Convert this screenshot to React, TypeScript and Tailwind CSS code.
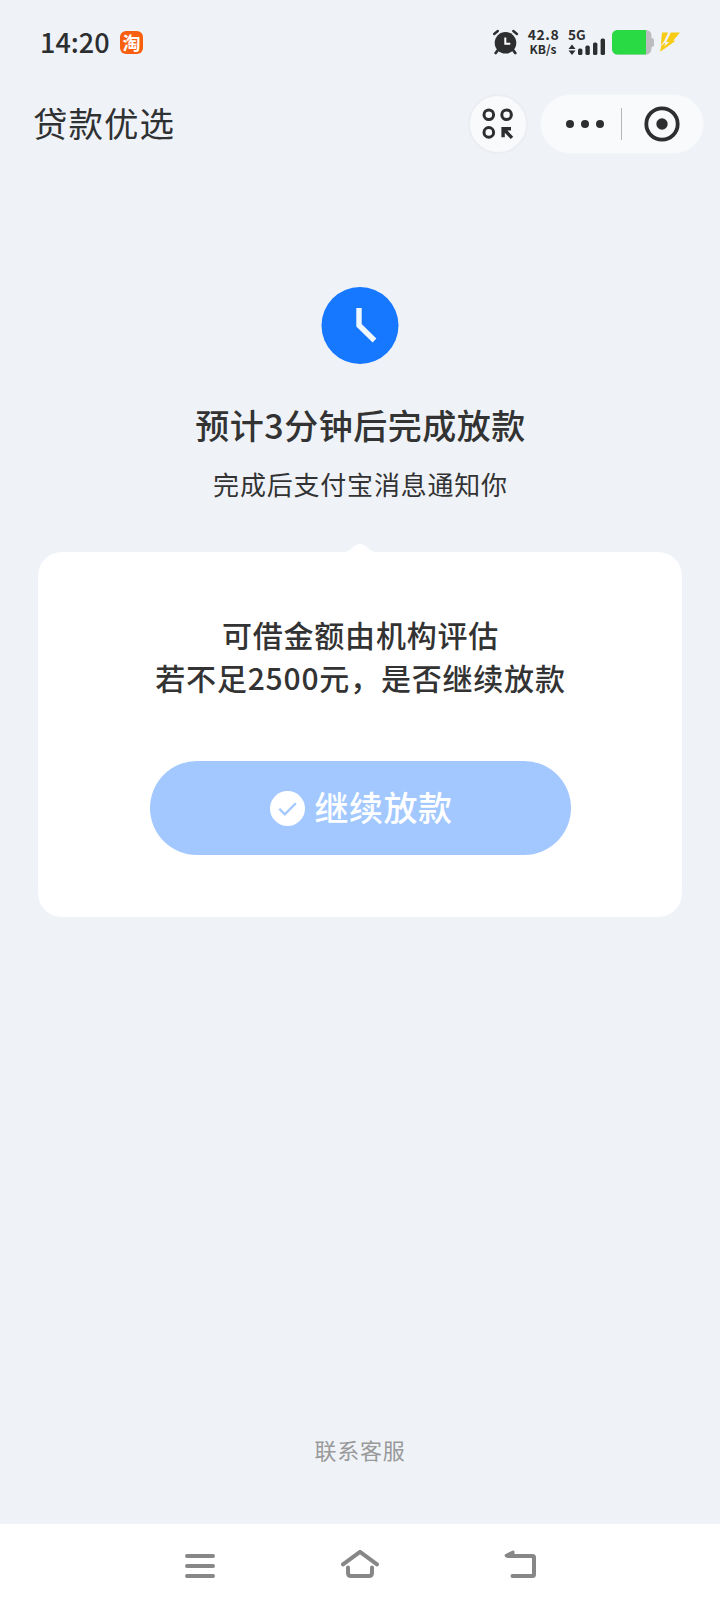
import type { ReactNode } from "react";

function TaobaoBadge() {
  return (
    <span className="flex h-[23px] w-[23px] items-center justify-center rounded-[6px] bg-[#f8600f] text-[18px] leading-none font-bold text-white">
      淘
    </span>
  );
}

function AlarmIcon() {
  return (
    <svg width="26" height="26" viewBox="0 0 26 26" fill="none">
      <circle cx="12.5" cy="13.8" r="10.8" fill="#2c2e30" />
      <path d="M5 21l-2.300 3M20 21l2.300 3" stroke="#2c2e30" strokeWidth="2.800" strokeLinecap="round" />
      <path d="M1.200 5L4.800 2M23.900 5L20.300 2" stroke="#2c2e30" strokeWidth="2.400" strokeLinecap="round" />
      <path d="M12.300 8.400v6.400h5" stroke="#fff" strokeWidth="2" />
    </svg>
  );
}

function SignalIcon() {
  return (
    <svg width="38" height="17" viewBox="0 0 38 17" fill="#2c2e30">
      <path d="M4 6.600L7.500 11H.5zM4 17L7.500 12.600H.5z" />
      <rect x="10" y="10.600" width="4.400" height="6.400" rx="1.600" />
      <rect x="17.400" y="7.600" width="4.400" height="9.400" rx="1.600" />
      <rect x="25" y="4.600" width="4.400" height="12.400" rx="1.600" />
      <rect x="32.600" y="0.600" width="4.400" height="16.400" rx="1.600" />
    </svg>
  );
}

function BatteryIcon() {
  return (
    <svg width="42" height="25" viewBox="0 0 42 25">
      <rect x="36" y="8" width="6" height="9" rx="2.500" fill="#bcbcbe" />
      <rect x="0" y="0" width="39.500" height="24.500" rx="5.500" fill="#bcbcbe" />
      <path d="M5.500 0H34v24.500H5.500A5.500 5.500 0 0 1 0 19V5.500A5.500 5.500 0 0 1 5.500 0z" fill="#29da45" />
    </svg>
  );
}

function BoltIcon() {
  return (
    <svg width="21" height="22" viewBox="0 0 21 22" fill="#f8cc14">
      <path d="M2 1.600H8.200L3.600 11 0.800 14z" />
      <path d="M10.800 1.600H20L13.200 9.800H15.600L6 16.800 0 20.800 1.400 14.600 5.400 11.400 4.400 15.400 9.200 11H6.200z" />
    </svg>
  );
}

function AppsIcon() {
  return (
    <svg width="32" height="32" viewBox="0 0 32 32" fill="none" stroke="#2c2e30">
      <circle cx="6.800" cy="6.700" r="4.800" strokeWidth="3" />
      <circle cx="24.600" cy="6.700" r="4.800" strokeWidth="3" />
      <circle cx="6.800" cy="24.400" r="4.800" strokeWidth="3" />
      <path d="M29 20.700H21.100V29.200M21.600 21L30 29.800" strokeWidth="3.400" />
    </svg>
  );
}

function StatusBar() {
  return (
    <div className="flex h-[84px] items-center pr-[39px] pl-[39px]">
      <span className="relative -top-px w-[71px] pl-px text-[27px] leading-none font-medium text-[#2c2e30]">14:20</span>
      <div className="ml-[10px]">
        <TaobaoBadge />
      </div>
      <div className="ml-auto flex items-center">
        <AlarmIcon />
        <div className="ml-2 flex w-[33px] flex-col items-center font-bold text-[#2c2e30]">
          <span className="h-[13px] text-[14px] leading-[11px] tracking-[0.500px]">42.8</span>
          <span className="h-[13px] pr-px text-[12px] leading-[13px]">KB/s</span>
        </div>
        <div className="ml-2 flex w-[38px] flex-col">
          <span className="h-[8px] text-[13.500px] leading-[9px] font-bold text-[#2c2e30]">5G</span>
          <SignalIcon />
        </div>
        <div className="ml-[6px]">
          <BatteryIcon />
        </div>
        <div className="ml-[6px]">
          <BoltIcon />
        </div>
      </div>
    </div>
  );
}

function TitleBar() {
  return (
    <header className="flex h-[79px] items-center pr-4 pl-[33px]">
      <h1 className="pb-[3px] text-[34.500px] leading-none tracking-[1px] text-[#2f3133]">贷款优选</h1>
      <button className="ml-auto flex h-[60px] w-[60px] items-center justify-center rounded-full border-2 border-[#ebedf3] bg-[#f8fafb]">
        <AppsIcon />
      </button>
      <div className="ml-3 flex h-[60px] w-[164px] items-center rounded-full border border-[#f3f5f9] bg-[#f8fafb]">
        <div className="flex w-[80px] justify-center gap-[7px] pl-[8px]">
          <span className="h-2 w-2 rounded-full bg-[#2c2e30]" />
          <span className="h-2 w-2 rounded-full bg-[#2c2e30]" />
          <span className="h-2 w-2 rounded-full bg-[#2c2e30]" />
        </div>
        <span className="h-8 w-px bg-[#b4b6b8]" />
        <div className="flex flex-1 justify-center pr-[2px]">
          <svg width="36" height="36" viewBox="0 0 36 36">
            <circle cx="18" cy="18" r="15.700" fill="none" stroke="#2c2e30" strokeWidth="3.800" />
            <circle cx="18" cy="18" r="5.700" fill="#2c2e30" />
          </svg>
        </div>
      </div>
    </header>
  );
}

function ConfirmCard() {
  return (
    <section className="relative mx-[38.400px] mt-12 flex h-[365px] flex-col items-center rounded-[24px] bg-white pt-[61px]">
      {/* notch pointing at the status text */}
      <svg className="absolute -top-[8px] left-1/2 -translate-x-1/2" width="34" height="9" viewBox="0 0 34 9" fill="#fff">
        <path d="M0 9C4 8 7 5.500 11 2.500 15 -0.800 19 -0.800 23 2.500 27 5.500 30 8 34 9z" />
      </svg>
      <p className="pl-px text-center text-[30px] leading-[43px] font-medium tracking-[0.800px] text-[#333]">
        可借金额由机构评估
        <br />
        若不足2500元，是否继续放款
      </p>
      <button className="mt-[62px] flex h-[94px] w-[421px] items-center justify-center gap-[10px] rounded-full bg-[#a2c8ff] pl-[2px] text-[34px] font-medium tracking-[0.500px] text-white">
        <svg width="35" height="35" viewBox="0 0 35 35" fill="none">
          <circle cx="17.500" cy="17.500" r="17.500" fill="#fff" />
          <path d="M9.300 17.700L14.800 23.300 25.800 12.300" stroke="#a2c8ff" strokeWidth="2.300" />
        </svg>
        <span className="pb-[3px]">继续放款</span>
      </button>
    </section>
  );
}

function NavKey({ children }: { children: ReactNode }) {
  return (
    <svg
      width="40"
      height="32"
      viewBox="0 0 40 32"
      fill="none"
      stroke="#878787"
      strokeWidth="4"
      strokeLinecap="round"
      strokeLinejoin="round"
    >
      {children}
    </svg>
  );
}

function SystemNav() {
  return (
    <nav className="flex h-[84px] items-center justify-center gap-[120px] bg-white">
      <NavKey>
        <path d="M7 6h26M7 16h26M7 26h26" />
      </NavKey>
      <NavKey>
        <path d="M3 14.300L20 1.800 37 14.300" />
        <path d="M8 17.500v5.500q0 3 3 3h18q3 0 3-3v-5.500" />
      </NavKey>
      <NavKey>
        <path d="M12.500 26h20q1.500 0 1.500-1.500V7.500q0-1.500-1.500-1.500H7.500" />
        <path d="M6 5.500L13 2V6z" fill="#878787" strokeWidth="3" />
      </NavKey>
    </nav>
  );
}

export default function App() {
  return (
    <div className="flex h-[1608px] w-[720px] flex-col bg-[#eff3f8] font-['Noto_Sans_CJK_SC',sans-serif]">
      <StatusBar />
      <TitleBar />
      <main className="flex flex-1 flex-col">
        <div className="flex flex-col items-center pt-[124px]">
          <svg width="78" height="77" viewBox="0 0 78 77" fill="none">
            <circle cx="39" cy="38.500" r="38.500" fill="#1677ff" />
            <path d="M38 21V38.300L53.500 53.500" stroke="#f0f8ff" strokeWidth="5.400" />
          </svg>
          <h2 className="mt-9 pl-px text-[34px] leading-[50px] font-medium tracking-[0.500px] text-[#333]">
            预计3分钟后完成放款
          </h2>
          <p className="mt-[14px] pl-px text-[26px] leading-[40px] tracking-[0.800px] text-[#333]">
            完成后支付宝消息通知你
          </p>
        </div>
        <ConfirmCard />
        <a className="mt-auto mb-[59px] text-center text-[22px] leading-8 tracking-[0.800px] text-[#999]">联系客服</a>
      </main>
      <SystemNav />
    </div>
  );
}
